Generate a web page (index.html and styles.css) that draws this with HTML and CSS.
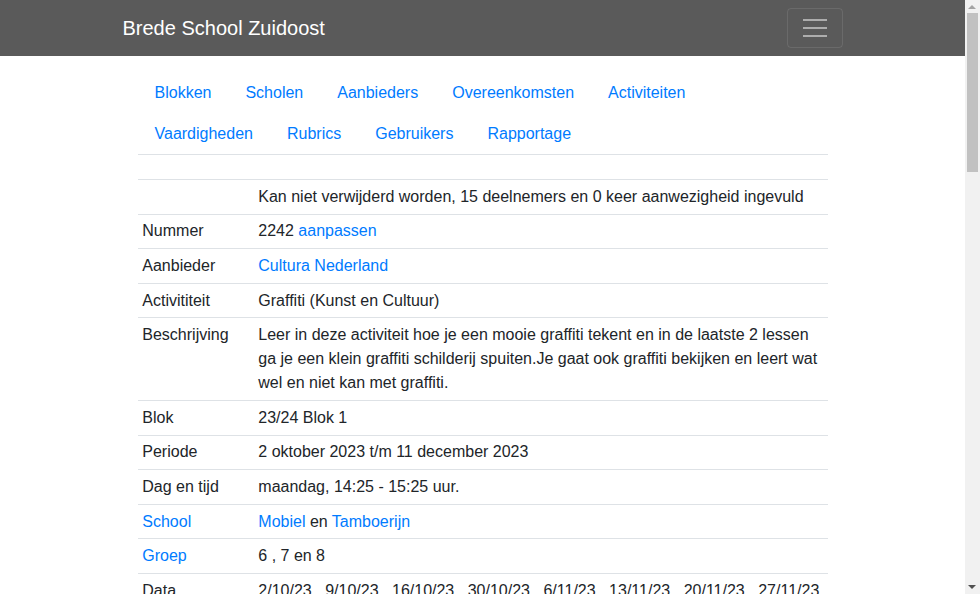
FILE: index.html
```html
<!DOCTYPE html>
<html lang="nl">
<head>
<meta charset="utf-8">
<title>Brede School Zuidoost</title>
<link rel="stylesheet" href="styles.css">
</head>
<body>
<nav class="navbar">
  <div class="navbar-inner">
    <a class="brand" href="#">Brede School Zuidoost</a>
    <button class="toggler" type="button" aria-label="Menu">
      <span class="toggler-icon"><span></span><span></span><span></span></span>
    </button>
  </div>
</nav>
<main class="page">
  <ul class="tabs">
    <li><a href="#">Blokken</a></li>
    <li><a href="#">Scholen</a></li>
    <li><a href="#">Aanbieders</a></li>
    <li><a href="#">Overeenkomsten</a></li>
    <li><a href="#">Activiteiten</a></li>
    <li><a href="#">Vaardigheden</a></li>
    <li><a href="#">Rubrics</a></li>
    <li><a href="#">Gebruikers</a></li>
    <li><a href="#">Rapportage</a></li>
  </ul>
  <table class="details">
    <tbody>
      <tr><th></th><td>Kan niet verwijderd worden, 15 deelnemers en 0 keer aanwezigheid ingevuld</td></tr>
      <tr><th>Nummer</th><td>2242 <a href="#">aanpassen</a></td></tr>
      <tr><th>Aanbieder</th><td><a href="#">Cultura Nederland</a></td></tr>
      <tr><th>Activititeit</th><td>Graffiti (Kunst en Cultuur)</td></tr>
      <tr><th>Beschrijving</th><td>Leer in deze activiteit hoe je een mooie graffiti tekent en in de laatste 2 lessen ga je een klein graffiti schilderij spuiten.Je gaat ook graffiti bekijken en leert wat wel en niet kan met graffiti.</td></tr>
      <tr><th>Blok</th><td>23/24 Blok 1</td></tr>
      <tr><th>Periode</th><td>2 oktober 2023 t/m 11 december 2023</td></tr>
      <tr><th>Dag en tijd</th><td>maandag, 14:25 - 15:25 uur.</td></tr>
      <tr><th><a href="#">School</a></th><td><a href="#">Mobiel</a> en <a href="#">Tamboerijn</a></td></tr>
      <tr><th><a href="#">Groep</a></th><td>6 , 7 en 8</td></tr>
      <tr><th>Data</th><td><span class="date">2/10/23</span> <span class="date">9/10/23</span> <span class="date">16/10/23</span> <span class="date">30/10/23</span> <span class="date">6/11/23</span> <span class="date">13/11/23</span> <span class="date">20/11/23</span> <span class="date">27/11/23</span> <span class="date">4/12/23</span> <span class="date">11/12/23</span></td></tr>
      <tr><th>Deelnemers</th><td>15</td></tr>
      <tr><th>Minimum</th><td>8</td></tr>
      <tr><th>Maximum</th><td>15</td></tr>
      <tr><th>Locatie</th><td>Mobiel</td></tr>
    </tbody>
  </table>
</main>
<div class="scrollbar" aria-hidden="true">
  <span class="sb-up"></span>
  <span class="sb-thumb"></span>
  <span class="sb-down"></span>
</div>
</body>
</html>
```
FILE: styles.css
```css
* { box-sizing: border-box; }
html, body { margin: 0; padding: 0; }
body {
  font-family: "Liberation Sans", Arial, sans-serif;
  font-size: 16px;
  line-height: 1.5;
  color: #212529;
  background: #fff;
  padding-right: 15px;
}
a { color: #007bff; text-decoration: none; }

.navbar {
  background: #5a5a5a;
  padding: 8px 0;
}
.navbar-inner {
  width: 720px;
  margin: 0 auto;
  display: flex;
  align-items: center;
  justify-content: space-between;
}
.brand {
  color: #fff;
  font-size: 20px;
  line-height: 30px;
  padding: 5px 0;
  white-space: nowrap;
}
.toggler {
  width: 56px;
  height: 40px;
  padding: 0;
  background: transparent;
  border: 1px solid rgba(255,255,255,0.1);
  border-radius: 4px;
  display: flex;
  align-items: center;
  justify-content: center;
}
.toggler-icon {
  width: 24px;
  display: flex;
  flex-direction: column;
  gap: 6px;
}
.toggler-icon span {
  display: block;
  height: 2px;
  background: rgba(255,255,255,0.5);
}

.page {
  width: 720px;
  margin: 0 auto;
  padding: 16px 15px 0;
  min-height: 2051px;
}
.tabs {
  list-style: none;
  margin: 0 0 24px;
  padding: 0;
  display: flex;
  flex-wrap: wrap;
  border-bottom: 1px solid #dee2e6;
}
.tabs li { margin-bottom: -1px; }
.tabs a {
  display: block;
  padding: 8px 16px;
  border: 1px solid transparent;
}
.details {
  width: 100%;
  border-collapse: collapse;
}
.details th, .details td {
  padding: 4.8px;
  border-top: 1px solid #dee2e6;
  vertical-align: top;
  text-align: left;
}
.details th {
  font-weight: normal;
  width: 116px;
}
.date + .date { margin-left: 9px; }

/* imitation of the browser's vertical scrollbar */
.scrollbar {
  position: fixed;
  top: 0;
  right: 0;
  width: 15px;
  height: 100vh;
  background: #f1f1f1;
}
.sb-thumb {
  position: absolute;
  left: 2px;
  top: 13px;
  width: 11px;
  height: 159px;
  background: #c1c1c1;
}
.sb-up, .sb-down {
  position: absolute;
  left: 3px;
  width: 0;
  height: 0;
  border-left: 4.5px solid transparent;
  border-right: 4.5px solid transparent;
}
.sb-up {
  top: 5px;
  border-bottom: 4px solid #a3a3a3;
}
.sb-down {
  bottom: 5px;
  border-top: 4px solid #505050;
}
```
